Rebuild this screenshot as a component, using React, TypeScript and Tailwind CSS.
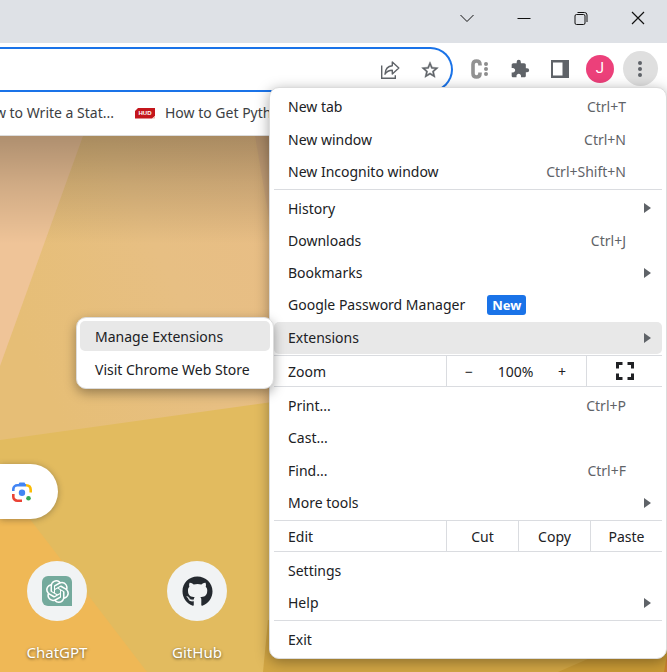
import type { ReactNode } from "react";
import { FaGithub } from "react-icons/fa";
import { SiOpenai } from "react-icons/si";
import { MdExtension } from "react-icons/md";

function Wallpaper() {
  return (
    <svg className="absolute inset-0 h-full w-full" viewBox="0 136 667 536" preserveAspectRatio="xMinYMin slice" aria-hidden="true">
      <defs>
        <linearGradient id="sand" x1="0" y1="0.5" x2="1" y2="0">
          <stop offset="0" stopColor="#e6be76" />
          <stop offset="0.5" stopColor="#e7bf83" />
          <stop offset="1" stopColor="#e8bd86" />
        </linearGradient>
        <linearGradient id="shade" x1="0" y1="0" x2="0" y2="1">
          <stop offset="0" stopColor="#000" stopOpacity="0.27" />
          <stop offset="0.45" stopColor="#000" stopOpacity="0.13" />
          <stop offset="1" stopColor="#000" stopOpacity="0" />
        </linearGradient>
      </defs>
      <rect y="136" width="667" height="536" fill="#e2bb5f" />
      <polygon points="0,136 280,136 280,401 0,440" fill="url(#sand)" />
      <polygon points="0,136 83,136 0,366" fill="#efc498" />
      <polygon points="255,136 300,136 300,400" fill="#dfb587" />
      <polygon points="0,480 147,672 0,672" fill="#efb856" />
      <polygon points="263,672 268,620 667,620 667,672" fill="#d2a644" />
      <polygon points="558,672 597,655 667,640 667,672" fill="#c99a35" />
      <polygon points="664,672 667,655 667,672" fill="#c87f2f" />
      <rect y="136" width="667" height="108" fill="url(#shade)" />
    </svg>
  );
}

function WindowButton({ label, children }: { label: string; children: ReactNode }) {
  return (
    <button aria-label={label} className="flex w-[57px] items-center justify-center">
      <svg width="14" height="14" viewBox="0 0 14 14" fill="none" stroke="#111" strokeWidth="1">
        {children}
      </svg>
    </button>
  );
}

function TitleBar() {
  return (
    <header className="flex h-[43px] justify-end bg-[#dee1e6] pr-px pb-2">
      <WindowButton label="Search tabs">
        <path d="M.5 4 7 10.5 13.5 4" />
      </WindowButton>
      <WindowButton label="Minimize">
        <path d="M.5 7.5h13" />
      </WindowButton>
      <WindowButton label="Restore">
        <rect x="1" y="3.5" width="10" height="10" rx="1.5" />
        <path d="M3.5 1.5h7a2.500 2.500 0 0 1 2.500 2.500v7" />
      </WindowButton>
      <WindowButton label="Close">
        <path d="m1 1 12 12M13 1 1 13" strokeWidth="1.2" />
      </WindowButton>
    </header>
  );
}

function ToolButton({ label, children }: { label: string; children: ReactNode }) {
  return (
    <button aria-label={label} className="flex w-10 shrink-0 items-center justify-center text-[#5f6368]">
      {children}
    </button>
  );
}

function Toolbar() {
  return (
    <div className="flex gap-[7px] bg-white pt-1 pr-[7px]">
      <div className="flex h-[45px] min-w-0 flex-1 rounded-r-full border-2 border-l-0 border-[#1a73e8] pr-px">
        <input aria-label="Address and search bar" className="min-w-0 flex-1 outline-none" />
        <ToolButton label="Share this page">
          <svg width="20" height="20" viewBox="0 0 20 20" fill="none" stroke="currentColor" strokeWidth="1.4">
            <path d="M1.700 5.500v12.800h13.600v-3" />
            <path d="M12.300 2v3.800C7.800 6.200 5.300 9 5 14.200c1.700-2.900 4-4 7.300-4V14L18.800 8z" strokeLinejoin="round" />
          </svg>
        </ToolButton>
        <ToolButton label="Bookmark this tab">
          <svg width="20" height="20" viewBox="0 0 24 24" fill="currentColor" stroke="currentColor" strokeWidth="0.5">
            <path d="m22 9.240-7.190-.62L12 2 9.190 8.630 2 9.240l5.460 4.730L5.820 21 12 17.270 18.180 21l-1.630-7.030L22 9.240zM12 15.400l-3.760 2.270 1-4.280-3.320-2.880 4.380-.38L12 6.100l1.710 4.040 4.380.38-3.320 2.880 1 4.280L12 15.400z" />
          </svg>
        </ToolButton>
      </div>
      <div className="flex h-[43px]">
        <ToolButton label="Clip extension">
          <svg width="20" height="20" viewBox="0 0 20 20" fill="none">
            <path d="M10 6.500V5.500Q10 2 6.500 2T3 5.500v9Q3 18 6.500 18T10 14.500v-1" stroke="#929292" strokeWidth="3.600" />
            <g fill="#8d8d8d">
              <circle cx="16" cy="5" r="2" />
              <circle cx="16" cy="10" r="2" />
              <circle cx="16" cy="15" r="2" />
            </g>
          </svg>
        </ToolButton>
        <ToolButton label="Extensions">
          <MdExtension size={20} />
        </ToolButton>
        <ToolButton label="Side panel">
          <svg width="18" height="18" viewBox="0 0 18 18">
            <path fill="currentColor" fillRule="evenodd" d="M0 0h18v18H0zM2 2.500h9.500v13H2z" />
          </svg>
        </ToolButton>
        <ToolButton label="Profile">
          <span className="flex size-7 items-center justify-center rounded-full bg-[#ec407a] font-[Roboto,sans-serif] text-[15px] text-white">J</span>
        </ToolButton>
        <ToolButton label="Customize and control">
          <span className="flex size-[35px] shrink-0 items-center justify-center rounded-full bg-[#dfdfdf]">
            <svg width="4" height="16" viewBox="0 0 4 16" fill="currentColor">
              <circle cx="2" cy="2" r="2" />
              <circle cx="2" cy="8" r="2" />
              <circle cx="2" cy="14" r="2" />
            </svg>
          </span>
        </ToolButton>
      </div>
    </div>
  );
}

function BookmarksBar() {
  return (
    <nav className="flex h-11 items-center gap-[21px] overflow-hidden border-b border-[#dcdcdc] bg-white pb-0.5 text-[#3c4043]">
      <a href="#stat" className="flex w-[114px] shrink-0 justify-end whitespace-nowrap">
        How to Write a Stat...
      </a>
      <a href="#python" className="flex shrink-0 items-center gap-[10px] whitespace-nowrap">
        <svg width="20" height="12" viewBox="0 0 20 12">
          <path d="M3 1h17v8l-3 2.500H0V4z" fill="#c4161c" />
          <path d="M17 11.500 20 9v2.500z" fill="#eba" />
          <text x="3.500" y="8.200" fontSize="6" fontWeight="700" fill="#fff" fontFamily="Liberation Sans, sans-serif">HUD</text>
        </svg>
        How to Get Python
      </a>
    </nav>
  );
}

function Shortcut({ name, children }: { name: string; children: ReactNode }) {
  return (
    <a href={"#" + name} className="flex w-[140px] flex-col items-center gap-[19px] text-white">
      <span className="flex size-[60px] items-center justify-center rounded-full bg-[#f1f3f4]">{children}</span>
      <span className="text-[15px] leading-6 [text-shadow:0_1px_3px_rgba(0,0,0,0.6)]">{name}</span>
    </a>
  );
}

function NewTabPage() {
  return (
    <main className="relative h-[536px] overflow-hidden">
      <Wallpaper />
      <div className="relative pt-[328px]">
        <div className="flex h-[55px] w-[58px] items-center rounded-r-full bg-white pl-3 shadow-[0_1px_6px_rgba(32,33,36,0.35)]">
          <button aria-label="Search by image">
            <svg width="20" height="20" viewBox="0 0 20 20" fill="none" strokeWidth="2.600">
              <path d="M1.300 9V7a4 4 0 0 1 4-3.700H14" stroke="#4285f4" />
              <path d="M6 3 7.500.500h5L14 3z" fill="#4285f4" />
              <path d="M14 3.300q4.700 0 4.700 4.700v2.500" stroke="#fbbc04" />
              <path d="M1.300 12v2.700a4 4 0 0 0 4 4H10" stroke="#ea4335" />
              <circle cx="10" cy="10.800" r="3.200" fill="#4285f4" />
              <circle cx="16.500" cy="16.300" r="2.300" fill="#34a853" />
            </svg>
          </button>
        </div>
        <div className="-ml-[13px] flex pt-[42px]">
          <Shortcut name="ChatGPT">
            <span className="flex size-[30px] items-center justify-center rounded-tl-md rounded-tr-md rounded-bl-md bg-[#74aa9c] text-white">
              <SiOpenai size={23} />
            </span>
          </Shortcut>
          <Shortcut name="GitHub">
            <FaGithub size={31} color="#24292f" />
          </Shortcut>
        </div>
      </div>
    </main>
  );
}

type ItemProps = { label: string; keys?: string; arrow?: boolean; badge?: string; active?: boolean };

function MenuItem({ label, keys, arrow, badge, active }: ItemProps) {
  return (
    <button
      role="menuitem"
      className={"flex w-full flex-1 items-center rounded-[5px] pl-[14px] text-left " + (active ? "my-px bg-[#e8e8e8]" : "")}
    >
      <span>{label}</span>
      {badge && (
        <span className="ml-[22px] rounded-[3px] bg-[#1a73e8] px-[5px] text-[13px] leading-5 font-bold text-white">{badge}</span>
      )}
      {keys && <span className="mr-9 ml-auto text-[#5f6368]">{keys}</span>}
      {arrow && (
        <svg className="mr-[11px] ml-auto" width="7" height="10" viewBox="0 0 7 10" fill="#5f6368">
          <path d="M0 0 7 5 0 10z" />
        </svg>
      )}
    </button>
  );
}

function Group({ className, items }: { className: string; items: ItemProps[] }) {
  return (
    <div className={"flex flex-col " + className}>
      {items.map((item) => (
        <MenuItem key={item.label} {...item} />
      ))}
    </div>
  );
}

const cell = "flex w-[72px] items-center justify-center border-l border-[#dadce0]";

function BrowserMenu() {
  return (
    <div
      role="menu"
      className="absolute top-[87px] right-0 w-[398px] rounded-[10px] border border-[#dcdcdc] bg-white px-1 pt-0.5 pb-[3px] shadow-[0_3px_14px_rgba(0,0,0,0.35)]"
    >
      <Group
        className="mb-px h-[98px]"
        items={[
          { label: "New tab", keys: "Ctrl+T" },
          { label: "New window", keys: "Ctrl+N" },
          { label: "New Incognito window", keys: "Ctrl+Shift+N" },
        ]}
      />
      <hr className="mb-0.5 border-[#dadce0]" />
      <Group
        className="h-[163px]"
        items={[
          { label: "History", arrow: true },
          { label: "Downloads", keys: "Ctrl+J" },
          { label: "Bookmarks", arrow: true },
          { label: "Google Password Manager", badge: "New" },
          { label: "Extensions", arrow: true, active: true },
        ]}
      />
      <div className="mb-0.5 flex h-8 border-y border-[#dadce0]">
        <span className="flex flex-1 items-center pl-[14px]">Zoom</span>
        <div className="flex w-[140px] items-center justify-between border-l border-[#dadce0] px-[18px]">
          <button aria-label="Zoom out">−</button>
          <span>100%</span>
          <button aria-label="Zoom in" className="pr-0.5">+</button>
        </div>
        <button aria-label="Full screen" className="flex w-[76px] items-center justify-center border-l border-[#dadce0]">
          <svg width="18" height="18" viewBox="0 0 18 18" fill="none" stroke="#202124" strokeWidth="3">
            <path d="M1.500 6.500v-5h5M11.500 1.500h5v5M16.500 11.500v5h-5M6.500 16.500h-5v-5" />
          </svg>
        </button>
      </div>
      <Group
        className="mb-px h-[130px]"
        items={[
          { label: "Print...", keys: "Ctrl+P" },
          { label: "Cast..." },
          { label: "Find...", keys: "Ctrl+F" },
          { label: "More tools", arrow: true },
        ]}
      />
      <div className="mb-0.5 flex h-8 border-y border-[#dadce0]">
        <span className="flex flex-1 items-center pl-[14px]">Edit</span>
        <button className={cell}>Cut</button>
        <button className={cell}>Copy</button>
        <button className={cell}>Paste</button>
      </div>
      <Group className="mb-px h-[65px]" items={[{ label: "Settings" }, { label: "Help", arrow: true }]} />
      <hr className="mb-0.5 border-[#dadce0]" />
      <Group className="h-8" items={[{ label: "Exit" }]} />
    </div>
  );
}

function ExtensionsMenu() {
  return (
    <div
      role="menu"
      className="absolute top-[317px] right-[393px] w-[198px] rounded-[10px] border border-[#dcdcdc] bg-white p-[3px] shadow-[0_4px_12px_rgba(0,0,0,0.35)]"
    >
      <button role="menuitem" className="flex h-[30px] w-full items-center rounded-[5px] bg-[#e8e8e8] pl-[15px]">
        Manage Extensions
      </button>
      <button role="menuitem" className="mt-0.5 flex h-8 w-full items-center pl-[15px]">
        Visit Chrome Web Store
      </button>
    </div>
  );
}

export default function App() {
  return (
    <div className="relative overflow-hidden bg-white font-['Noto_Sans','Open_Sans',sans-serif] text-[14px] text-[#202124]">
      <TitleBar />
      <Toolbar />
      <BookmarksBar />
      <NewTabPage />
      <BrowserMenu />
      <ExtensionsMenu />
    </div>
  );
}
